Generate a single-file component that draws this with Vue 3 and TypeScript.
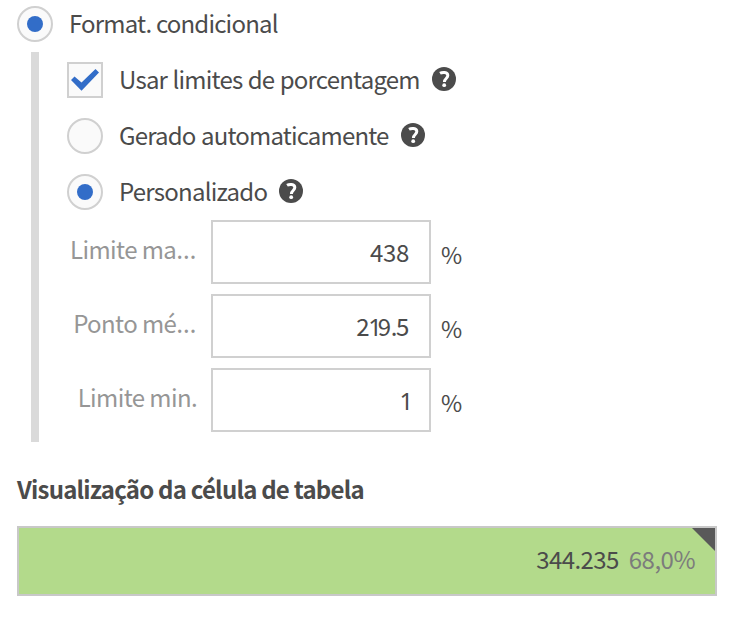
<script setup lang="ts">
import { reactive, ref } from 'vue'

interface LimitField {
  id: string
  label: string
  clipped: boolean
  value: string
}

const usePercent = ref<boolean>(true)
const mode = ref<'auto' | 'custom'>('custom')
const limits = reactive<LimitField[]>([
  { id: 'max', label: 'Limite ma', clipped: true, value: '438' },
  { id: 'mid', label: 'Ponto mé', clipped: true, value: '219.5' },
  { id: 'min', label: 'Limite min.', clipped: false, value: '1' },
])

// Proportional figures: the digit one and the point take less room.
const glyphClass = (value: string, i: number): string => {
  if (value[i] === '1') return 'one'
  if (value[i] === '.') return 'point'
  return value[i + 1] === '1' ? 'before-one' : ''
}
</script>

<template>
  <main class="panel">
    <div class="option">
      <span class="radio on"></span>
      <span class="text t-format">Format. condicional</span>
    </div>

    <section class="group">
      <div class="option" @click="usePercent = !usePercent">
        <span class="check">
          <svg v-if="usePercent" viewBox="0 0 32 32" width="32" height="32">
            <path d="M2 16 L5.5 12.5 L12.5 18.5 L26.5 5 L30 8.5 L12.5 26.7 Z" fill="#326dc8" />
          </svg>
        </span>
        <span class="text t-percent">Usar limites de porcentagem</span>
        <svg class="help" viewBox="0 0 24 24"><circle cx="12" cy="12" r="12" /><path d="M8 6.3 C10.2 5 15.8 4.7 15.8 8.6 C15.8 11.4 12.4 11.7 12.4 14.9" /><circle class="dot" cx="12.2" cy="18.2" r="1.9" /></svg>
      </div>
      <div class="option" @click="mode = 'auto'">
        <span class="radio" :class="{ on: mode === 'auto' }"></span>
        <span class="text t-auto">Gerado automaticamente</span>
        <svg class="help" viewBox="0 0 24 24"><circle cx="12" cy="12" r="12" /><path d="M8 6.3 C10.2 5 15.8 4.7 15.8 8.6 C15.8 11.4 12.4 11.7 12.4 14.9" /><circle class="dot" cx="12.2" cy="18.2" r="1.9" /></svg>
      </div>
      <div class="option" @click="mode = 'custom'">
        <span class="radio" :class="{ on: mode === 'custom' }"></span>
        <span class="text t-custom">Personalizado</span>
        <svg class="help" viewBox="0 0 24 24"><circle cx="12" cy="12" r="12" /><path d="M8 6.3 C10.2 5 15.8 4.7 15.8 8.6 C15.8 11.4 12.4 11.7 12.4 14.9" /><circle class="dot" cx="12.2" cy="18.2" r="1.9" /></svg>
      </div>

      <div class="fields">
        <div v-for="f in limits" :key="f.id" class="field">
          <span :class="['label', f.id]">{{ f.label }}<span v-if="f.clipped" class="dots">…</span></span>
          <div class="input" role="textbox" tabindex="0"><span v-for="(c, i) in f.value.split('')" :key="i" :class="glyphClass(f.value, i)">{{ c }}</span></div>
          <span class="unit">%</span>
        </div>
      </div>
    </section>

    <h2 class="title">Visualização da célula de tabela</h2>
    <div class="cell">
      <span class="amount">344.235</span>
      <span class="share">68,0%</span>
      <span class="corner"></span>
    </div>
  </main>
</template>

<style>
body {
  background: #fff;
}
</style>

<style scoped>
.panel {
  box-sizing: border-box;
  width: 736px;
  height: 618px;
  padding: 6px 19px 0 17px;
  overflow: hidden;
  color: #4b4b4b;
  font: 24px/36px "Noto Sans CJK SC", "Noto Sans", sans-serif;
}
.option {
  display: flex;
  align-items: center;
  height: 36px;
}
.text {
  margin: -2px 0 0 16px;
  white-space: nowrap;
}
.t-format {
  letter-spacing: -0.81px;
}
.t-percent {
  letter-spacing: -0.78px;
  word-spacing: 0.7px;
}
.t-auto {
  letter-spacing: -0.83px;
  word-spacing: 1px;
}
.t-custom {
  letter-spacing: -0.76px;
}
.radio,
.check {
  box-sizing: border-box;
  flex: none;
  display: flex;
  align-items: center;
  justify-content: center;
  width: 36px;
  height: 36px;
  border: 2px solid #d0d0d0;
  background: #fafafa;
}
.radio {
  border-radius: 50%;
}
.radio.on::after {
  content: "";
  width: 16px;
  height: 16px;
  border-radius: 50%;
  background: #326dc8;
}
.help {
  flex: none;
  width: 24px;
  height: 24px;
  margin: -2px 0 0 12px;
  fill: #4b4b4b;
}
.help path {
  fill: none;
  stroke: #fff;
  stroke-width: 3;
}
.help .dot {
  fill: #fff;
}
.group {
  box-sizing: border-box;
  display: flex;
  flex-direction: column;
  gap: 20px;
  height: 390px;
  margin: 10px 0 0 14px;
  padding: 10px 0 0 28px;
  border-left: 8px solid #dadada;
}
.fields {
  display: flex;
  flex-direction: column;
  gap: 10px;
  margin-top: -10px;
}
.field {
  display: flex;
  height: 64px;
}
.label {
  width: 130px;
  margin-right: 14px;
  padding-top: 11px;
  color: #969696;
  letter-spacing: -0.6px;
  text-align: right;
  white-space: nowrap;
}
.dots {
  font-family: "Noto Sans", sans-serif;
  font-size: 25.5px;
  letter-spacing: 0.6px;
}
.input {
  box-sizing: border-box;
  width: 220px;
  height: 64px;
  padding: 12px 20px 0 12px;
  border: 2px solid #d0d0d0;
  background: #fff;
  letter-spacing: -0.3px;
  text-align: right;
  white-space: nowrap;
}
.one {
  font-family: "Noto Sans", sans-serif;
  letter-spacing: -4.2px;
}
.before-one {
  letter-spacing: -1.5px;
}
.point {
  letter-spacing: -1.4px;
}
.unit {
  margin-left: 10px;
  padding-top: 16px;
  font-size: 23px;
}
.title {
  margin: 29px 0 19px;
  font-size: 24px;
  font-weight: 700;
  letter-spacing: -0.79px;
  line-height: 36px;
  white-space: nowrap;
}
.cell {
  position: relative;
  box-sizing: border-box;
  display: flex;
  align-items: center;
  justify-content: flex-end;
  gap: 10px;
  height: 70px;
  padding: 0 20px 4px 0;
  border: 2px solid #c8c8c8;
  background: #b3da8b;
}
.amount {
  letter-spacing: -0.6px;
}
.share {
  color: #7c7c7c;
  letter-spacing: -0.5px;
}
.corner {
  position: absolute;
  top: 0;
  right: 0;
  width: 23px;
  height: 23px;
  background: #595959;
  clip-path: polygon(0 0, 100% 0, 100% 100%);
}
</style>
